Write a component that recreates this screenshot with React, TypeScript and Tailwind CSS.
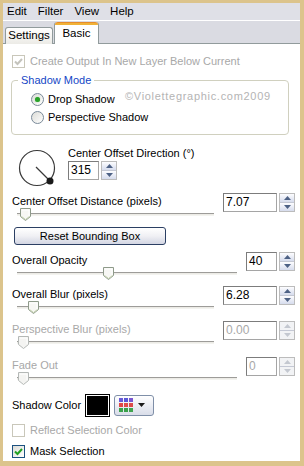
import React from 'react';

const FONT = "font-['Liberation_Sans',Arial,sans-serif]";

function Check({ checked, disabled }: { checked?: boolean; disabled?: boolean }) {
  return (
    <div
      className={`w-[13px] h-[13px] border flex items-center justify-center ${
        disabled ? 'border-[#c9c7ba] bg-white' : 'border-[#1c5180] bg-gradient-to-br from-[#dcdcd7] to-white'
      }`}
    >
      {checked && (
        <svg width="9" height="9" viewBox="0 0 9 9">
          <path d="M1 4.5 L3.5 7 L8 2" fill="none" stroke={disabled ? '#c4c3bc' : '#21a121'} strokeWidth="2" />
        </svg>
      )}
    </div>
  );
}

function Radio({ on }: { on?: boolean }) {
  return (
    <div className="w-[13px] h-[13px] rounded-full border border-[#7a8a99] bg-gradient-to-br from-[#dcdcd7] to-white flex items-center justify-center">
      {on && <div className="w-[5px] h-[5px] rounded-full bg-[#2aa12a] shadow-[0_0_1px_#6fcf6f]" />}
    </div>
  );
}

function Arrow({ up, disabled }: { up?: boolean; disabled?: boolean }) {
  return (
    <svg width="7" height="4" viewBox="0 0 7 4">
      <path d={up ? 'M0 4 L3.5 0 L7 4 Z' : 'M0 0 L3.5 4 L7 0 Z'} fill={disabled ? '#c4c8d0' : '#4d6185'} />
    </svg>
  );
}

function Spin({ value, w, disabled }: { value: string; w: string; disabled?: boolean }) {
  return (
    <div className="flex items-center gap-[2px]">
      <div
        className={`${w} h-[19px] border border-[#a5a5a5] border-t-[#7c7c7c] border-l-[#7c7c7c] bg-white pl-[2px] text-[12px] leading-[17px] ${
          disabled ? 'text-[#a8a8a8]' : 'text-black'
        }`}
      >
        {value}
      </div>
      <div className="w-[16px] h-[19px] border border-[#bcbcbc] flex flex-col">
        <div className={`flex-1 flex items-center justify-center border-b border-[#c4c8d4] ${disabled ? 'bg-[#f2f3f5]' : 'bg-gradient-to-b from-[#fdfdff] to-[#d6dced]'}`}>
          <Arrow up disabled={disabled} />
        </div>
        <div className={`flex-1 flex items-center justify-center ${disabled ? 'bg-[#f2f3f5]' : 'bg-gradient-to-b from-[#fdfdff] to-[#d6dced]'}`}>
          <Arrow disabled={disabled} />
        </div>
      </div>
    </div>
  );
}

function Slider({ track, thumb, disabled }: { track: string; thumb: number; disabled?: boolean }) {
  return (
    <div className={`relative h-[14px] ${track}`}>
      <div className="absolute left-0 right-0 top-[5px] h-[3px] border-t border-[#9d9c99] border-b border-b-[#f3f3ef] bg-[#ecebe6]" />
      <svg className="absolute top-0" style={{ left: thumb }} width="11" height="13" viewBox="0 0 11 13">
        <path
          d="M0.5 0.5 H10.5 V8.5 L5.5 12.5 L0.5 8.5 Z"
          fill={disabled ? '#f4f4f2' : '#f7f7f4'}
          stroke={disabled ? '#b4b8b6' : '#8e9a8a'}
        />
        <path d="M2 2 H9 V8" fill="none" stroke="#ffffff" />
        {!disabled && <path d="M1.5 8.5 L5.5 11.5 L9.5 8.5" fill="none" stroke="#c1cfaa" />}
      </svg>
    </div>
  );
}

function Dial() {
  return (
    <svg width="40" height="40" viewBox="0 0 40 40">
      <circle cx="19" cy="19" r="17.5" fill="white" stroke="#3a3a3a" strokeWidth="1.2" />
      <line x1="18" y1="18" x2="31" y2="31" stroke="#3a3a3a" strokeWidth="1.3" />
      <circle cx="32" cy="32" r="3.5" fill="#1a1a1a" />
    </svg>
  );
}

export default function App() {
  return (
    <div className={`w-[304px] h-[466px] bg-[#dcc48c] pt-[3px] pl-[3px] pr-[4px] pb-[5px] ${FONT} text-[11px] text-black whitespace-nowrap`}>
      <div className="w-full h-full bg-white flex flex-col overflow-hidden">
        {/* menu */}
        <div className="h-[17px] bg-[#dfe0e7] flex items-center pl-[4px] gap-[11px] leading-none text-[11.5px]">
          <span>Edit</span>
          <span>Filter</span>
          <span>View</span>
          <span>Help</span>
        </div>
        <div className="h-px bg-white" />
        {/* tabs */}
        <div className="h-[23px] bg-[#dadbe2] flex items-end pl-[2px] border-b border-[#919b9c] relative text-[11.5px]">
          <div className="w-[48px] h-[17px] mb-[-1px] bg-gradient-to-b from-white to-[#ecebe6] border border-[#919b9c] border-b-0 rounded-t-[3px] flex items-center justify-center pb-[1px]">
            Settings
          </div>
          <div className="w-[45px] h-[22px] mb-[-1px] ml-[1px] bg-white border border-[#919b9c] border-b-0 border-t-0 rounded-t-[3px] flex flex-col relative">
            <div className="h-[3px] rounded-t-[3px] bg-[#f0b237] border-t border-[#e68b2c]" />
            <div className="flex-1 flex items-center justify-center pb-[2px]">Basic</div>
          </div>
        </div>
        {/* panel */}
        <div className="flex-1 flex flex-col pl-[9px] pr-[5px] pt-[10px] relative">
          <div className="flex items-center gap-[5px] h-[15px] text-[#a8a8a8]">
            <Check checked disabled />
            <span>Create Output In New Layer Below Current</span>
          </div>

          {/* group box */}
          <div className="mt-[11px] ml-[-1px] mr-[6px] border border-[#d0d0bf] rounded-[4px] h-[55px] relative pl-[19px] pt-[12px] flex flex-col gap-[5px]">
            <span className="absolute -top-[8px] left-[6px] bg-white px-[3px] text-[#1547c6] leading-[14px]">Shadow Mode</span>
            <div className="flex items-center gap-[4px] h-[13px]">
              <Radio on />
              <span>Drop Shadow</span>
            </div>
            <div className="flex items-center gap-[4px] h-[13px]">
              <Radio />
              <span>Perspective Shadow</span>
            </div>
            <span className="absolute left-[113px] top-[8px] leading-[14px] text-[#b4b4b4] tracking-[0.7px]">©Violettegraphic.com2009</span>
          </div>

          {/* dial */}
          <div className="flex items-start mt-[9px]">
            <div className="ml-[6px] mt-[5px]">
              <Dial />
            </div>
            <div className="ml-[10px] mt-[2px] flex flex-col">
              <span className="leading-[14px]">Center Offset Direction (°)</span>
              <div className="mt-[1px]">
                <Spin value="315" w="w-[31px]" />
              </div>
            </div>
          </div>

          {/* distance */}
          <div className="flex items-start mt-[4px] h-[22px]">
            <div className="flex flex-col w-[211px]">
              <span className="leading-[14px] mt-[1px]">Center Offset Distance (pixels)</span>
              <Slider track="ml-[5px] w-[197px]" thumb={3} />
            </div>
            <Spin value="7.07" w="w-[54px]" />
          </div>

          {/* reset button */}
          <div className="mt-[12px] ml-[2px] w-[152px] h-[18px] rounded-[3px] border border-[#2b3f63] bg-gradient-to-b from-white via-[#f0f0f4] to-[#d3d6e3] flex items-center justify-center">
            Reset Bounding Box
          </div>

          {/* opacity */}
          <div className="flex items-start mt-[7px] h-[24px]">
            <div className="flex flex-col w-[235px]">
              <span className="leading-[14px] mt-[1px]">Overall Opacity</span>
              <Slider track="ml-[5px] w-[220px]" thumb={86} />
            </div>
            <Spin value="40" w="w-[31px]" />
          </div>

          {/* blur */}
          <div className="flex items-start mt-[10px] h-[24px]">
            <div className="flex flex-col w-[211px]">
              <span className="leading-[14px] mt-[1px]">Overall Blur (pixels)</span>
              <Slider track="ml-[5px] w-[197px]" thumb={11} />
            </div>
            <Spin value="6.28" w="w-[54px]" />
          </div>

          {/* perspective blur */}
          <div className="flex items-start mt-[11px] h-[24px]">
            <div className="flex flex-col w-[211px]">
              <span className="leading-[14px] mt-[1px] text-[#a8a8a8]">Perspective Blur (pixels)</span>
              <Slider track="ml-[5px] w-[197px]" thumb={1} disabled />
            </div>
            <Spin value="0.00" w="w-[54px]" disabled />
          </div>

          {/* fade out */}
          <div className="flex items-start mt-[12px] h-[24px]">
            <div className="flex flex-col w-[235px]">
              <span className="leading-[14px] mt-[1px] text-[#a8a8a8]">Fade Out</span>
              <Slider track="ml-[5px] w-[220px]" thumb={1} disabled />
            </div>
            <Spin value="0" w="w-[31px]" disabled />
          </div>

          {/* shadow color */}
          <div className="flex items-center mt-[12px] h-[24px]">
            <span className="w-[73px]">Shadow Color</span>
            <div className="w-[25px] h-[23px] border border-black p-[1px] bg-white">
              <div className="w-full h-full bg-black" />
            </div>
            <div className="ml-[4px] w-[40px] h-[21px] rounded-[3px] border border-[#7f8fa8] bg-gradient-to-b from-white to-[#d9dde9] flex items-center pl-[4px] gap-[5px]">
              <div className="grid grid-cols-3 gap-px w-[14px] h-[14px]">
                <div className="bg-[#6a5ad8]" />
                <div className="bg-[#5a58d6]" />
                <div className="bg-[#7a56d2]" />
                <div className="bg-[#e04848]" />
                <div className="bg-[#e04c4c]" />
                <div className="bg-[#dc4a4a]" />
                <div className="bg-[#3aa24c]" />
                <div className="bg-[#38a04a]" />
                <div className="bg-[#40a450]" />
              </div>
              <svg width="7" height="4" viewBox="0 0 7 4">
                <path d="M0 0 L3.5 4 L7 0 Z" fill="#1a1a1a" />
              </svg>
            </div>
          </div>

          <div className="flex items-center gap-[5px] h-[15px] mt-[6px] text-[#a8a8a8]">
            <Check disabled />
            <span>Reflect Selection Color</span>
          </div>
          <div className="flex items-center gap-[5px] h-[15px] mt-[6px]">
            <Check checked />
            <span>Mask Selection</span>
          </div>
        </div>
      </div>
    </div>
  );
}
